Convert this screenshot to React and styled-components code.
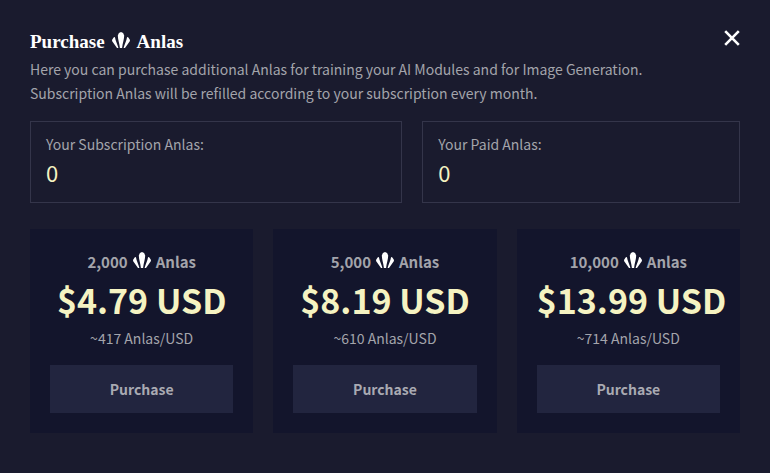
import React from "react";
import styled, { createGlobalStyle } from "styled-components";

const GlobalStyle = createGlobalStyle`
  * {
    box-sizing: border-box;
  }

  body {
    margin: 0;
    background-color: #1a1b2e;
    color: #a3a4ab;
    font-family: "Noto Sans CJK JP", "Noto Sans", sans-serif;
    font-size: 14px;
    line-height: 24px;
  }
`;

const Modal = styled.main`
  position: relative;
  padding: 30px;
`;

const CloseButton = styled.button`
  position: absolute;
  top: 30px;
  right: 30px;
  display: flex;
  padding: 0;
  border: none;
  background: none;
  color: #ffffff;
  cursor: pointer;
`;

const Title = styled.h1`
  display: flex;
  align-items: center;
  gap: 7px;
  margin: 0 0 3px;
  color: #ffffff;
  font-family: "Liberation Serif", serif;
  font-size: 19px;
  font-weight: 700;
  line-height: 24px;
`;

const Description = styled.p`
  margin: 0;
`;

const Balances = styled.section`
  display: flex;
  gap: 20px;
  margin-top: 16px;
`;

const Balance = styled.div`
  flex: 1 1 auto;
  padding: 10px 15px 14px;
  border: 1px solid #34354a;
`;

const Amount = styled.div`
  color: #f5f3c2;
  font-size: 22px;
  line-height: 32px;
`;

const Packages = styled.section`
  display: grid;
  grid-template-columns: repeat(3, minmax(0, 1fr));
  gap: 20px;
  margin-top: 26px;
`;

const Package = styled.article`
  padding: 21px 20px 20px;
  background-color: #13152c;
  text-align: center;
`;

const PackageName = styled.h2`
  display: flex;
  align-items: center;
  justify-content: center;
  gap: 5px;
  margin: 0;
  font-size: 15px;
  font-weight: 700;
  line-height: 24px;
`;

const Price = styled.div`
  color: #f5f3c2;
  font-size: 34px;
  font-weight: 700;
  line-height: 52px;
  white-space: nowrap;
`;

const PurchaseButton = styled.button`
  display: block;
  width: 100%;
  height: 48px;
  margin-top: 15px;
  border: none;
  background-color: #22253f;
  color: #a9aab2;
  font: inherit;
  font-weight: 700;
  cursor: pointer;
`;

const AnlasIcon = () => (
  <svg width="18" height="20" viewBox="0 0 18 20" fill="#ffffff" aria-hidden="true">
    <path d="M9 0L11.1 .9L12.2 3.4C12.1 7.5 10.6 11 10.1 16H7.9C7.4 11 5.9 7.5 5.8 3.4L6.9 .9Z" />
    <path d="M2.9 5C3.4 9 5.5 12 6.4 16H5L.2 9.2L0 8L1.6 5.5Z" />
    <path d="M15.1 5C14.6 9 12.5 12 11.6 16H13L17.8 9.2L18 8L16.4 5.5Z" />
  </svg>
);

const packages = [
  { amount: "2,000", price: "$4.79 USD", rate: "~417 Anlas/USD" },
  { amount: "5,000", price: "$8.19 USD", rate: "~610 Anlas/USD" },
  { amount: "10,000", price: "$13.99 USD", rate: "~714 Anlas/USD" },
];

const App = () => {
  return (
    <>
      <GlobalStyle />
      <Modal>
        <CloseButton type="button" aria-label="Close">
          <svg width="16" height="16" viewBox="0 0 16 16" fill="none" stroke="currentColor" strokeWidth="2.6">
            <path d="M1.2 1.2L14.8 14.8M14.8 1.2L1.2 14.8" />
          </svg>
        </CloseButton>

        <Title>
          <span>Purchase</span>
          <AnlasIcon />
          <span>Anlas</span>
        </Title>
        <Description>
          Here you can purchase additional Anlas for training your AI Modules and for Image Generation.
          <br />
          Subscription Anlas will be refilled according to your subscription every month.
        </Description>

        <Balances>
          <Balance>
            <div>Your Subscription Anlas:</div>
            <Amount>0</Amount>
          </Balance>
          <Balance>
            <div>Your Paid Anlas:</div>
            <Amount>0</Amount>
          </Balance>
        </Balances>

        <Packages>
          {packages.map(({ amount, price, rate }) => (
            <Package key={amount}>
              <PackageName>
                <span>{amount}</span>
                <AnlasIcon />
                <span>Anlas</span>
              </PackageName>
              <Price>{price}</Price>
              <div>{rate}</div>
              <PurchaseButton type="button">Purchase</PurchaseButton>
            </Package>
          ))}
        </Packages>
      </Modal>
    </>
  );
};

export default App;
